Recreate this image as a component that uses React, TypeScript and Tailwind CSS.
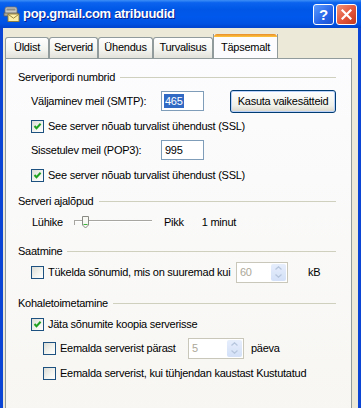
import React from "react";

function Check({ checked }: { checked?: boolean }) {
  return (
    <span className="relative inline-flex h-[13px] w-[13px] shrink-0 border border-[#1C5180] bg-[linear-gradient(135deg,#DCDCD7_0%,#F4F4F0_60%,#FFFFFF_100%)]">
      {checked && (
        <svg width="11" height="11" viewBox="0 0 11 11" className="absolute left-0 top-0">
          <path d="M2.5 5 L4.5 7.2 L8.6 2.8" stroke="#21A121" strokeWidth="2" fill="none" />
        </svg>
      )}
    </span>
  );
}

function Header({ children }: { children: React.ReactNode }) {
  return (
    <div className="flex h-4 items-center">
      <span className="whitespace-nowrap">{children}</span>
      <div className="ml-[5px] mt-[1px] h-px flex-1 bg-[#D0D0BF]" />
    </div>
  );
}

function Spin({ value, w }: { value: string; w: string }) {
  return (
    <div className={`flex h-[21px] ${w} shrink-0 border border-[#C9C7BA] bg-white`}>
      <span className="flex-1 pl-[3px] leading-[19px] text-[#ACA899]">{value}</span>
      <div className="m-[1px] flex w-[15px] flex-col rounded-[2px] bg-[linear-gradient(180deg,#E6EEFC,#D3E0F7)]">
        <div className="flex flex-1 items-center justify-center">
          <svg width="7" height="4" viewBox="0 0 7 4">
            <path d="M0.5 3.5 L3.5 0.8 L6.5 3.5" stroke="#B8C6DD" strokeWidth="1.3" fill="none" />
          </svg>
        </div>
        <div className="flex flex-1 items-center justify-center">
          <svg width="7" height="4" viewBox="0 0 7 4">
            <path d="M0.5 0.5 L3.5 3.2 L6.5 0.5" stroke="#B8C6DD" strokeWidth="1.3" fill="none" />
          </svg>
        </div>
      </div>
    </div>
  );
}

function Tab({ label, w, selected }: { label: string; w: string; selected?: boolean }) {
  if (selected) {
    return (
      <div
        className={`relative z-10 -mb-px flex h-[24px] ${w} flex-col border-x border-[#919B9C] bg-[#FCFCFE]`}
      >
        <div className="h-[3px] rounded-t-[3px] bg-[linear-gradient(180deg,#E68B2C,#FFC73C)]" />
        <div className="flex flex-1 items-start justify-center pt-[2px]">{label}</div>
      </div>
    );
  }
  return (
    <div
      className={`mt-[3px] flex h-[21px] ${w} items-center justify-center rounded-t-[3px] border border-b-0 border-[#919B9C] bg-[linear-gradient(180deg,#FFFFFF,#F3F3EF_60%,#E2E1DA)] pb-[1px]`}
    >
      {label}
    </div>
  );
}

export default function App() {
  return (
    <div className="flex h-[408px] w-[361px] flex-col overflow-hidden bg-[#ECE9D8] text-[11px] tracking-[-0.25px] text-black [font-family:'Liberation_Sans',Arial,sans-serif]">
      {/* Title bar */}
      <div className="flex h-[28px] shrink-0 items-center bg-[linear-gradient(180deg,#3D8FF6_0%,#0A62EE_10%,#0057E7_35%,#0058EC_60%,#0052E2_85%,#0043CC_100%)] pl-[3px] pr-[4px]">
        <svg width="17" height="16" viewBox="0 0 17 16" className="shrink-0">
          <path d="M2 3 Q2 1 4 1 L12 1 Q14 1 14 3 L14 8 L2 8 Z" fill="#C9C9C4" stroke="#6E6E6E" strokeWidth="0.8" />
          <rect x="3.5" y="2.5" width="9" height="2" fill="#8C8C88" />
          <rect x="1" y="7" width="14" height="3" fill="#A9A9A4" stroke="#5E5E5E" strokeWidth="0.8" />
          <rect x="5" y="8" width="11" height="7.5" fill="#FBEFA8" stroke="#8E7A34" strokeWidth="0.9" />
          <path d="M5.3 8.4 L10.5 12.2 L15.7 8.4" stroke="#8E7A34" strokeWidth="0.9" fill="none" />
        </svg>
        <span className="ml-[3px] text-[13px] font-bold tracking-[-0.3px] text-white [text-shadow:1px_1px_0_#0A1E8C]">
          pop.gmail.com atribuudid
        </span>
        <div className="flex-1" />
        <div className="flex h-[21px] w-[21px] items-center justify-center rounded-[3px] border border-white bg-[linear-gradient(135deg,#5D9BFF,#2664E8_60%,#1B52D2)] text-[15px] font-bold leading-none tracking-normal text-white">
          ?
        </div>
        <div className="ml-[2px] flex h-[21px] w-[21px] items-center justify-center rounded-[3px] border border-white bg-[linear-gradient(135deg,#F19478,#E2543A_55%,#C13A1D)]">
          <svg width="11" height="11" viewBox="0 0 11 11">
            <path d="M1.5 1.5 L9.5 9.5 M9.5 1.5 L1.5 9.5" stroke="white" strokeWidth="2.2" strokeLinecap="square" />
          </svg>
        </div>
      </div>

      {/* Body */}
      <div className="flex shrink-0 border-x-[3px] border-l-[#0B45D6] border-r-[#0B45D6]">
        <div className="ml-[2px] mr-[6px] mt-[6px] flex flex-1 flex-col">
          {/* Tabs */}
          <div className="flex items-start">
            <Tab label="Üldist" w="w-[44px]" />
            <Tab label="Serverid" w="w-[49px]" />
            <Tab label="Ühendus" w="w-[55px]" />
            <Tab label="Turvalisus" w="w-[60px]" />
            <Tab label="Täpsemalt" w="w-[65px]" selected />
          </div>
          {/* Panel */}
          <div className="flex h-[370px] flex-col border border-[#919B9C] bg-[linear-gradient(180deg,#FCFCFE,#F7F6F2)] pl-[12px] pr-[15px] pt-[10px]">
            <Header>Serveripordi numbrid</Header>
            <div className="ml-[13px] mt-[5px] flex h-[22px] items-center">
              <span className="w-[130px]">Väljaminev meil (SMTP):</span>
              <div className="flex h-[20px] w-[43px] items-center border border-[#7F9DB9] bg-white pl-[2px]">
                <span className="bg-[#316AC5] px-[1px] leading-[14px] text-white">465</span>
              </div>
              <div className="ml-[26px] flex h-[23px] w-[106px] items-center justify-center rounded-[3px] border border-[#003C74] bg-[linear-gradient(180deg,#FFFFFF,#F0F0EA_70%,#D8D5C8)] shadow-[inset_0_0_0_1px_#B9D1F8]">
                Kasuta vaikesätteid
              </div>
            </div>
            <div className="ml-[13px] mt-[6px] flex h-[16px] items-center gap-[4px]">
              <Check checked />
              <span>See server nõuab turvalist ühendust (SSL)</span>
            </div>
            <div className="ml-[13px] mt-[5px] flex h-[22px] items-center">
              <span className="w-[130px]">Sissetulev meil (POP3):</span>
              <div className="flex h-[20px] w-[43px] items-center border border-[#7F9DB9] bg-white pl-[3px]">
                995
              </div>
            </div>
            <div className="ml-[13px] mt-[6px] flex h-[16px] items-center gap-[4px]">
              <Check checked />
              <span>See server nõuab turvalist ühendust (SSL)</span>
            </div>

            <div className="mt-[10px]">
              <Header>Serveri ajalõpud</Header>
            </div>
            <div className="ml-[14px] mt-[3px] flex h-[20px] items-center">
              <span className="w-[40px]">Lühike</span>
              <svg width="82" height="20" viewBox="0 0 82 20" className="shrink-0">
                <rect x="2" y="8" width="78" height="1" fill="#A7A6A0" />
                <rect x="2" y="9" width="78" height="1" fill="#FFFFFF" />
                <rect x="2" y="8" width="1" height="5" fill="#A7A6A0" />
                <path d="M10.5 4.5 L16.5 4.5 L16.5 13 L13.5 16 L10.5 13 Z" fill="#F7F7F4" stroke="#8A8A84" strokeWidth="1" />
                <rect x="11.5" y="12" width="4" height="1" fill="#38B23A" />
              </svg>
              <span className="ml-[10px]">Pikk</span>
              <span className="ml-[18px]">1 minut</span>
            </div>

            <div className="mt-[11px]">
              <Header>Saatmine</Header>
            </div>
            <div className="ml-[13px] mt-[2px] flex h-[22px] items-center">
              <Check />
              <span className="ml-[4px] w-[188px] whitespace-nowrap">Tükelda sõnumid, mis on suuremad kui</span>
              <Spin value="60" w="w-[52px]" />
              <span className="ml-[20px]">kB</span>
            </div>

            <div className="mt-[12px]">
              <Header>Kohaletoimetamine</Header>
            </div>
            <div className="ml-[13px] mt-[5px] flex h-[16px] items-center gap-[4px]">
              <Check checked />
              <span>Jäta sõnumite koopia serverisse</span>
            </div>
            <div className="ml-[25px] mt-[5px] flex h-[22px] items-center">
              <Check />
              <span className="ml-[4px] w-[128px] whitespace-nowrap">Eemalda serverist pärast</span>
              <Spin value="5" w="w-[56px]" />
              <span className="ml-[7px]">päeva</span>
            </div>
            <div className="ml-[25px] mt-[6px] flex h-[16px] items-center gap-[4px]">
              <Check />
              <span>Eemalda serverist, kui tühjendan kaustast Kustutatud</span>
            </div>
          </div>
        </div>
      </div>
    </div>
  );
}
